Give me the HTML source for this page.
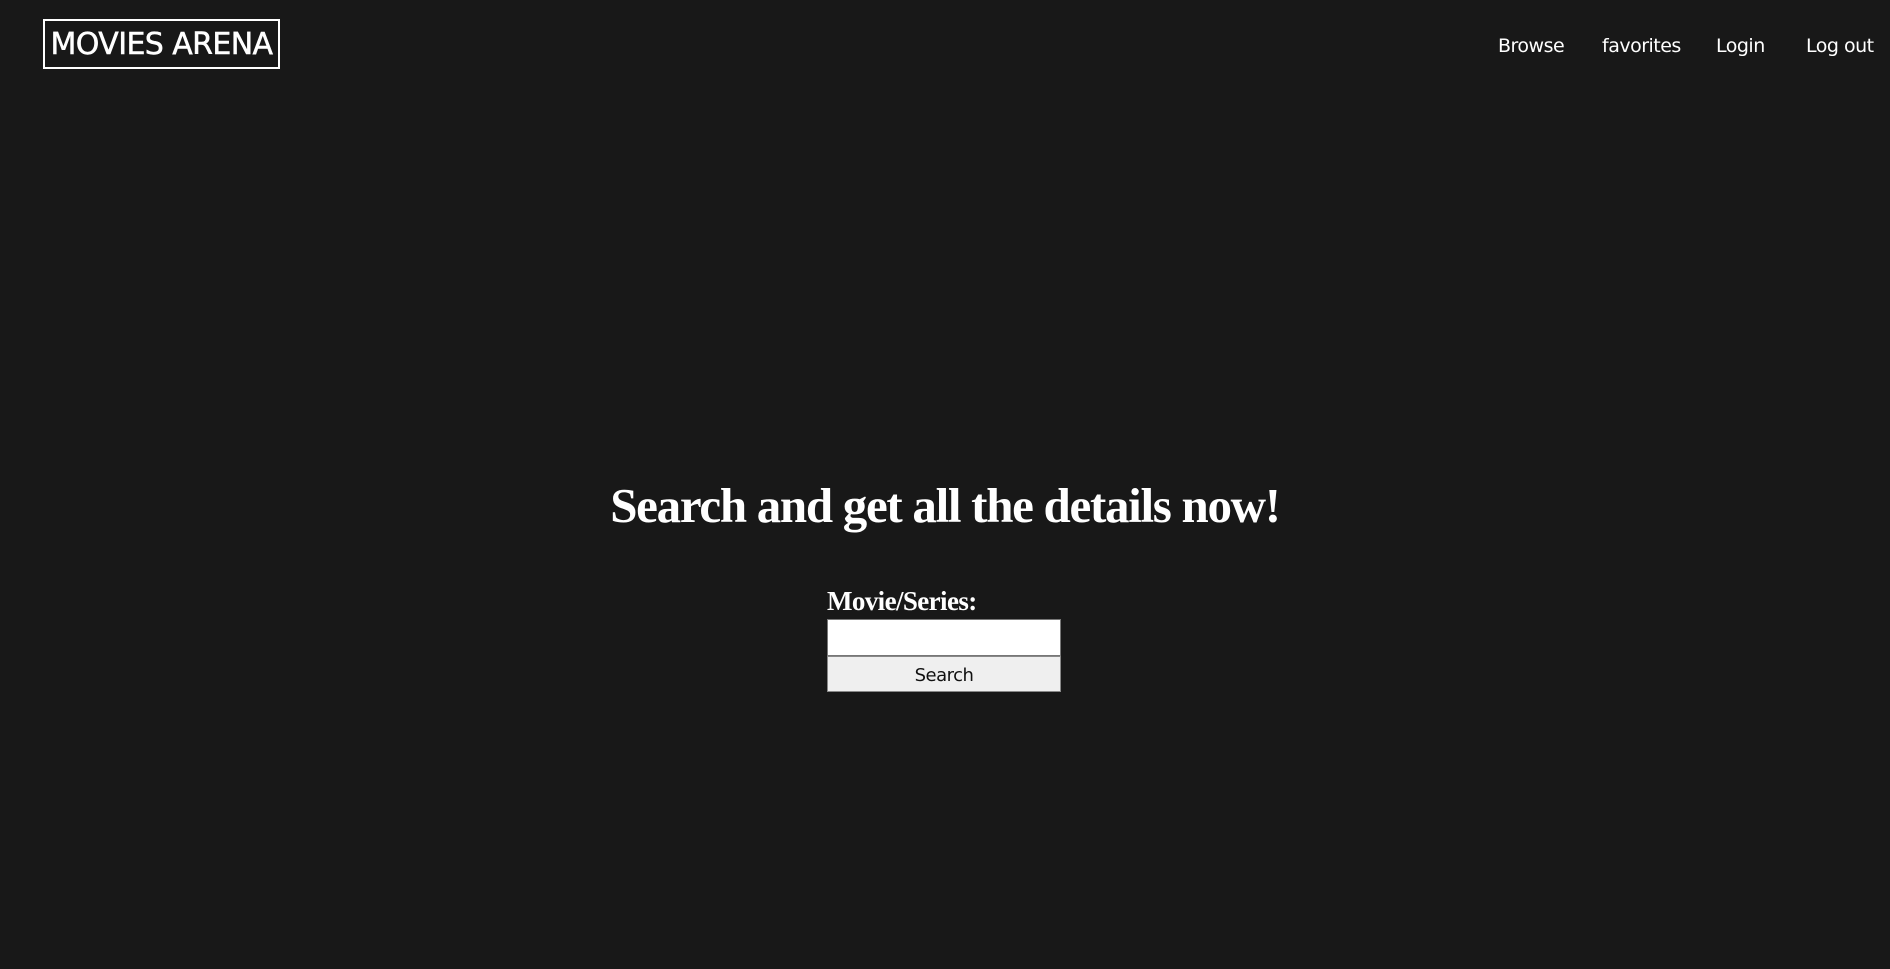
<!DOCTYPE html>
<html><head><style>
html,body{margin:0;padding:0;background:#181818;width:1890px;height:969px;overflow:hidden;color:#fff;}
.logo{position:absolute;left:43px;top:19px;width:233px;height:46px;border:2px solid #fff;box-sizing:content-box;font-family:"DejaVu Sans","Liberation Sans",sans-serif;font-size:30px;line-height:48px;text-align:center;letter-spacing:-0.6px;-webkit-text-stroke:0.5px #fff;white-space:nowrap;}
.nav{position:absolute;top:35px;font-family:"DejaVu Sans","Liberation Sans",sans-serif;font-size:19px;letter-spacing:-0.5px;}
h1{position:absolute;left:0;width:1890px;top:476px;margin:0;text-align:center;font-family:"Liberation Serif",serif;font-weight:bold;font-size:49px;line-height:60px;letter-spacing:-1.3px;}
.lab{position:absolute;left:827px;top:586px;font-family:"Liberation Serif",serif;font-weight:bold;font-size:27px;letter-spacing:-0.6px;}
.inp{position:absolute;left:827px;top:619px;width:232px;height:35px;background:#fff;border:1px solid #777;}
.btn{position:absolute;left:827px;top:656px;width:232px;height:34px;background:#efefef;border:1px solid #888;color:#111;text-align:center;font-family:"DejaVu Sans","Liberation Sans",sans-serif;font-size:18px;line-height:38px;letter-spacing:-0.5px;}
</style></head><body>
<div class="logo">MOVIES ARENA</div>
<div class="nav" style="left:1498px">Browse</div>
<div class="nav" style="left:1602px">favorites</div>
<div class="nav" style="left:1716px">Login</div>
<div class="nav" style="left:1806px">Log out</div>
<h1>Search and get all the details now!</h1>
<div class="lab">Movie/Series:</div>
<div class="inp"></div>
<div class="btn">Search</div>
</body></html>
